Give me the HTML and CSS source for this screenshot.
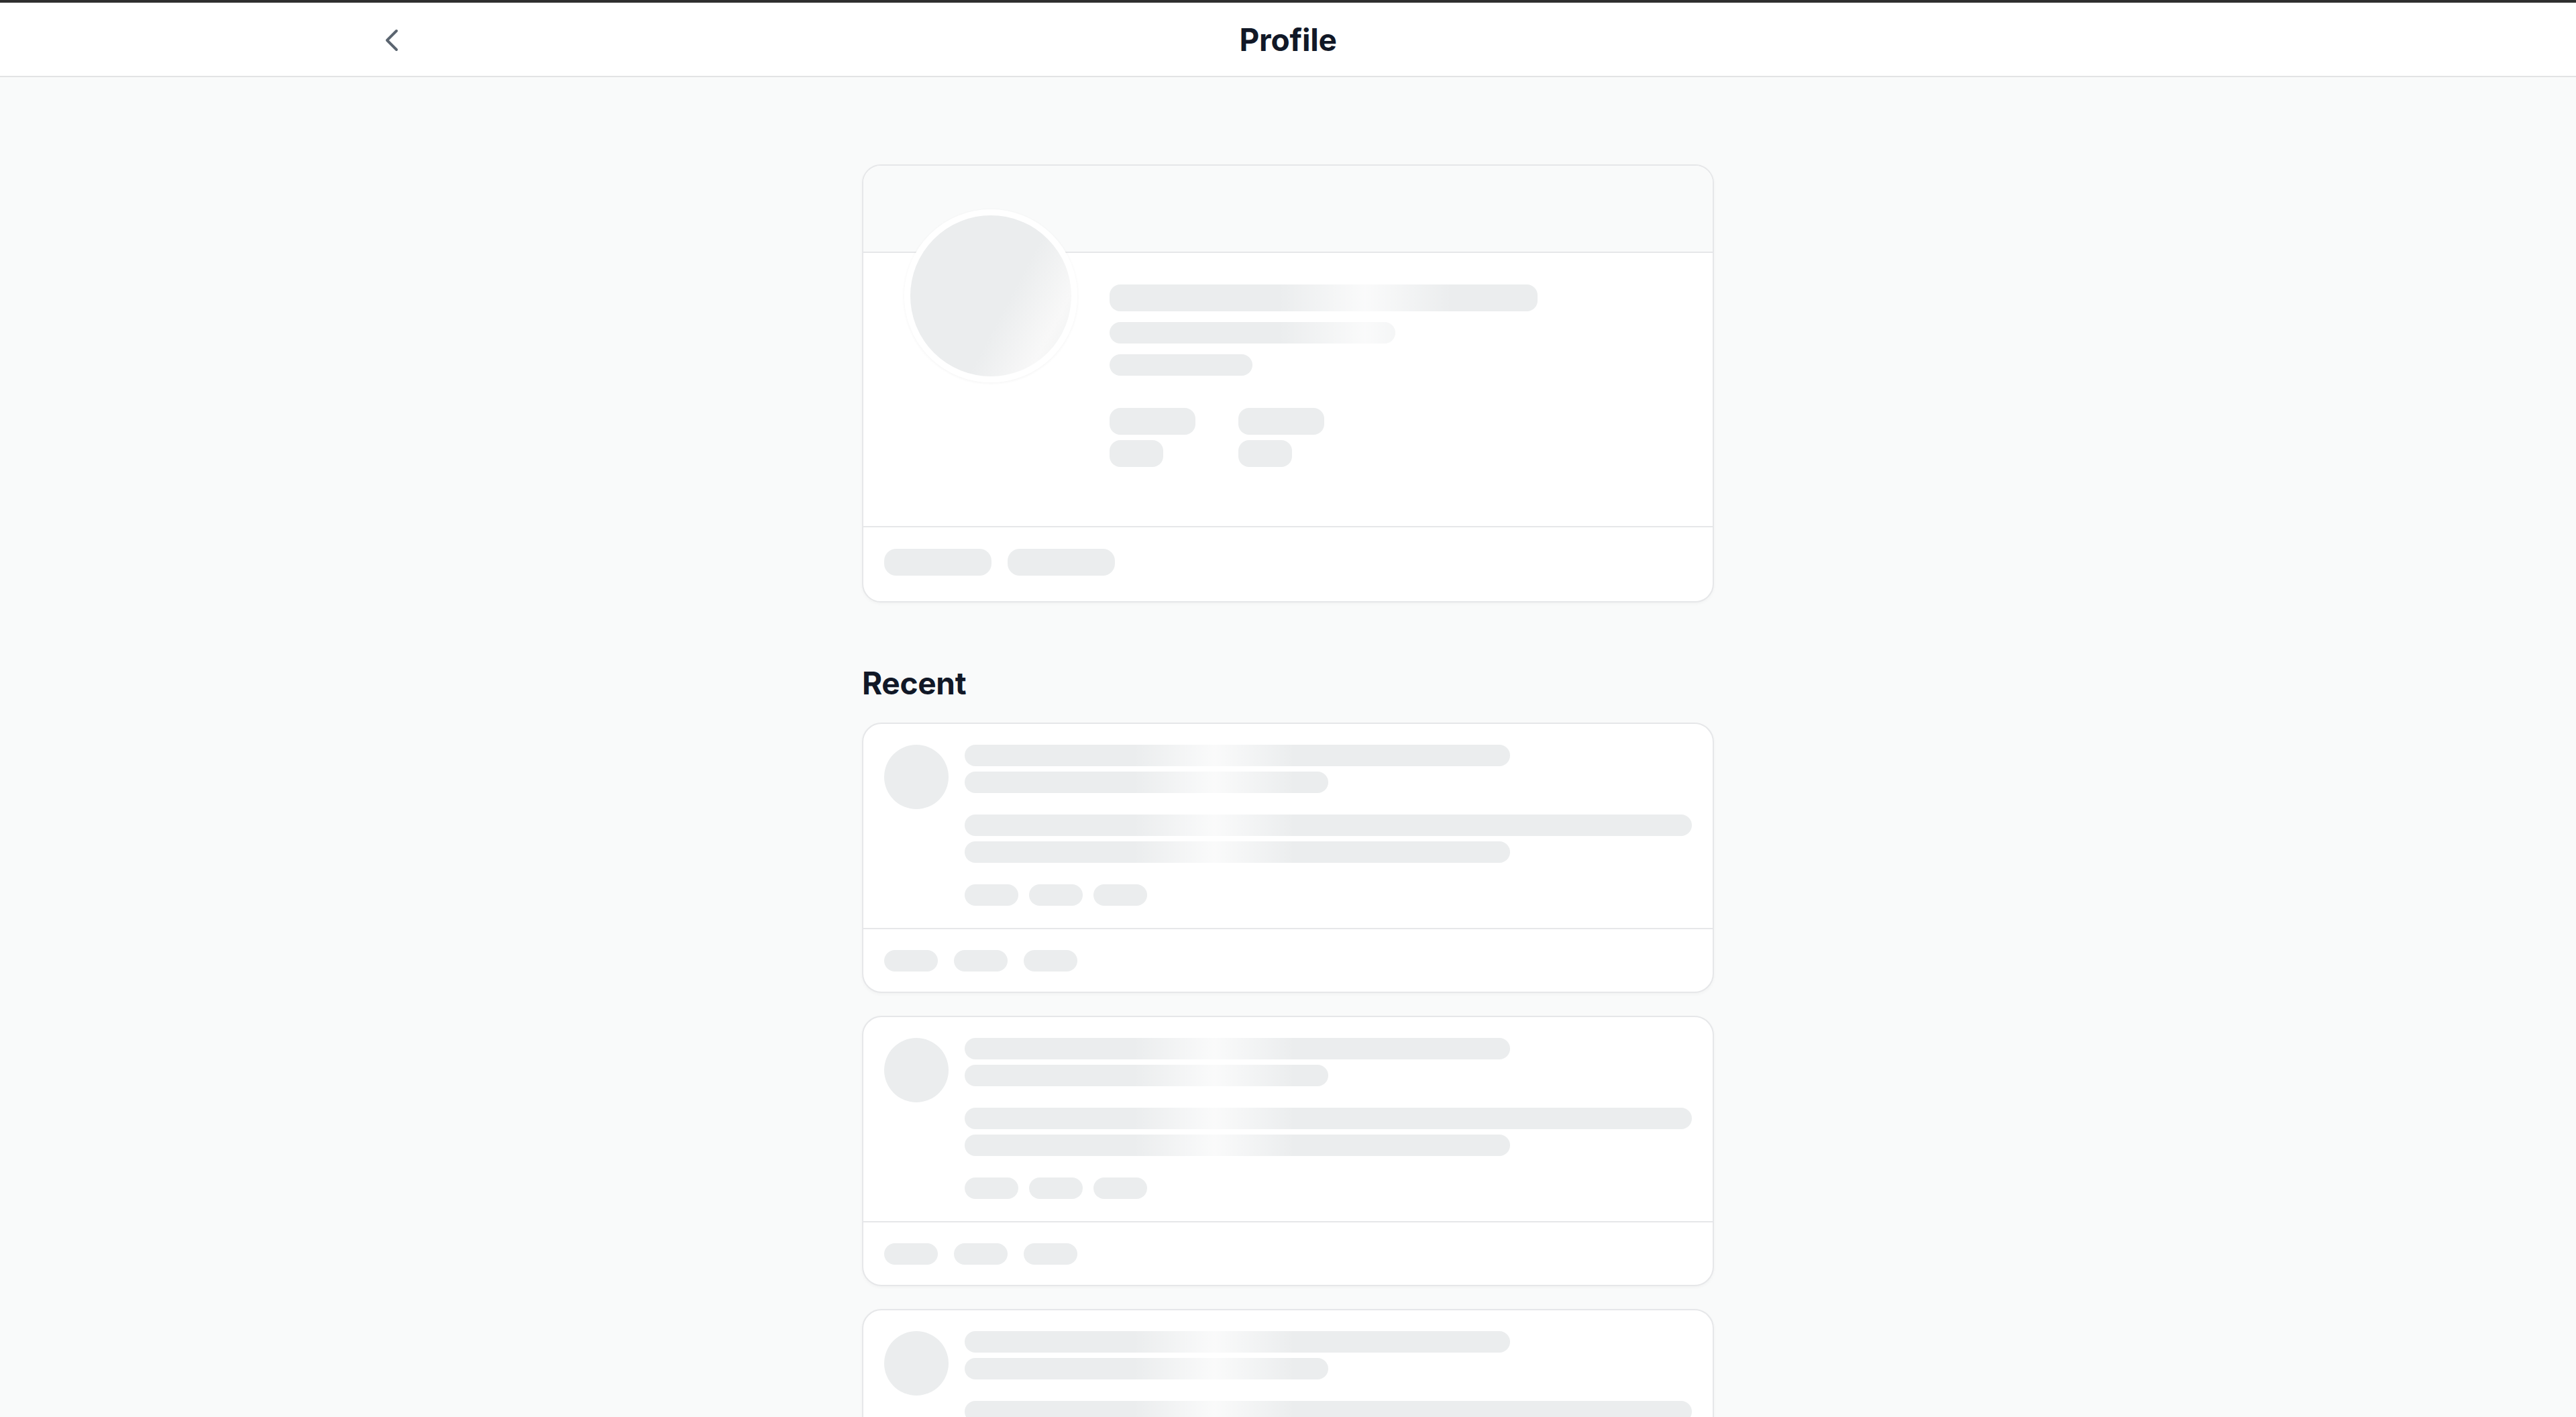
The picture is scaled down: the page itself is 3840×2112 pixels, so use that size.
FILE: index.html
```html
<!DOCTYPE html>
<html lang="en">
<head>
<meta charset="utf-8">
<title>Profile</title>
<link rel="stylesheet" href="styles.css">
</head>
<body>
<div class="topbar"></div>
<header class="header">
  <div class="header-left">
    <button class="back" aria-label="Back">
      <svg viewBox="0 0 24 24" width="56" height="56" fill="none" stroke="currentColor" stroke-width="1.7" stroke-linecap="round" stroke-linejoin="round"><path d="M15 18l-6-6 6-6"/></svg>
    </button>
  </div>
  <h1 class="title">Profile</h1>
  <div class="header-right"></div>
</header>

<main class="main">
  <section class="card profile">
    <div class="cover"></div>
    <div class="profile-body">
      <div class="avatar-lg"></div>
      <div class="info">
        <div class="sk hi-a bar-1"></div>
        <div class="sk hi-a bar-2"></div>
        <div class="sk bar-3"></div>
        <div class="stats">
          <div class="stat">
            <div class="sk stat-top"></div>
            <div class="sk stat-bottom"></div>
          </div>
          <div class="stat">
            <div class="sk stat-top"></div>
            <div class="sk stat-bottom"></div>
          </div>
        </div>
      </div>
    </div>
    <div class="profile-foot">
      <div class="sk pill"></div>
      <div class="sk pill"></div>
    </div>
  </section>

  <h2 class="section-title">Recent</h2>

  <div class="posts">
    <article class="card post">
      <div class="post-body">
        <div class="sk avatar-sm"></div>
        <div class="post-content">
          <div class="sk hi-b line w75"></div>
          <div class="sk hi-b line w50 tight"></div>
          <div class="sk hi-b line w100 loose"></div>
          <div class="sk hi-b line w75 tight"></div>
          <div class="chips">
            <div class="sk chip"></div>
            <div class="sk chip"></div>
            <div class="sk chip"></div>
          </div>
        </div>
      </div>
      <div class="post-foot">
        <div class="sk chip"></div>
        <div class="sk chip"></div>
        <div class="sk chip"></div>
      </div>
    </article>

    <article class="card post">
      <div class="post-body">
        <div class="sk avatar-sm"></div>
        <div class="post-content">
          <div class="sk hi-b line w75"></div>
          <div class="sk hi-b line w50 tight"></div>
          <div class="sk hi-b line w100 loose"></div>
          <div class="sk hi-b line w75 tight"></div>
          <div class="chips">
            <div class="sk chip"></div>
            <div class="sk chip"></div>
            <div class="sk chip"></div>
          </div>
        </div>
      </div>
      <div class="post-foot">
        <div class="sk chip"></div>
        <div class="sk chip"></div>
        <div class="sk chip"></div>
      </div>
    </article>

    <article class="card post">
      <div class="post-body">
        <div class="sk avatar-sm"></div>
        <div class="post-content">
          <div class="sk hi-b line w75"></div>
          <div class="sk hi-b line w50 tight"></div>
          <div class="sk hi-b line w100 loose"></div>
          <div class="sk hi-b line w75 tight"></div>
          <div class="chips">
            <div class="sk chip"></div>
            <div class="sk chip"></div>
            <div class="sk chip"></div>
          </div>
        </div>
      </div>
      <div class="post-foot">
        <div class="sk chip"></div>
        <div class="sk chip"></div>
        <div class="sk chip"></div>
      </div>
    </article>
  </div>
</main>
</body>
</html>
```
FILE: styles.css
```css
* { box-sizing: border-box; }

html, body {
  margin: 0;
  padding: 0;
}

body {
  background: #f9fafa;
  font-family: Inter, "Noto Sans", "Liberation Sans", sans-serif;
  color: #111827;
}

.topbar {
  height: 4px;
  background: #2f2f2f;
}

.header {
  height: 111px;
  background: #ffffff;
  border-bottom: 2px solid #e2e3e4;
  display: grid;
  grid-template-columns: 1fr auto 1fr;
  align-items: center;
}

.header-left {
  display: flex;
  align-items: center;
  padding-left: 556px;
  padding-top: 3px;
}

.back {
  border: 0;
  background: none;
  padding: 0;
  width: 56px;
  height: 56px;
  color: #5b6570;
  display: flex;
  align-items: center;
  justify-content: center;
  cursor: pointer;
}

.back svg { display: block; }

.title {
  margin: 0;
  font-size: 46px;
  font-weight: 700;
  line-height: 1;
  color: #111827;
  letter-spacing: -0.2px;
}

.main {
  width: 1270px;
  margin: 0 auto;
  padding-top: 130px;
  padding-bottom: 80px;
}

.card {
  background: #ffffff;
  border: 2px solid #e6e7e9;
  box-shadow: 0 2px 5px rgba(0, 0, 0, 0.035);
  overflow: hidden;
}

/* skeleton base */
.sk {
  background-color: #ebedee;
  border-radius: 16px;
}

.hi-a {
  background-image: linear-gradient(90deg, rgba(255,255,255,0) 0%, rgba(255,255,255,0.75) 50%, rgba(255,255,255,0) 100%);
  background-attachment: fixed;
  background-repeat: no-repeat;
  background-size: 260px 100%;
  background-position: 1905px 0;
}

.hi-b {
  background-image: linear-gradient(90deg, rgba(255,255,255,0) 0%, rgba(255,255,255,0.75) 50%, rgba(255,255,255,0) 100%);
  background-attachment: fixed;
  background-repeat: no-repeat;
  background-size: 240px 100%;
  background-position: 1690px 0;
}

/* profile card */
.profile {
  border-radius: 28px;
}

.cover {
  height: 130px;
  background: #f9fafa;
  border-bottom: 2px solid #e6e7e9;
}

.profile-body {
  display: flex;
  align-items: flex-start;
  padding: 0 48px 88px 61px;
}

.avatar-lg {
  position: relative;
  flex-shrink: 0;
  width: 258px;
  height: 258px;
  margin-top: -65px;
  border-radius: 50%;
  border: 9px solid #ffffff;
  background: linear-gradient(118deg, #ebedee 0%, #ebedee 58%, #f8f8f8 82%, #eef0f0 100%);
  box-shadow: 0 1px 4px rgba(0, 0, 0, 0.05);
}

.info {
  flex: 1;
  margin-left: 48px;
  padding-top: 47px;
  display: flex;
  flex-direction: column;
}

.bar-1 { width: 75%; height: 40px; }
.bar-2 { width: 50%; height: 32px; margin-top: 16px; }
.bar-3 { width: 25%; height: 32px; margin-top: 16px; }

.stats {
  display: flex;
  gap: 64px;
  margin-top: 48px;
}

.stat {
  display: flex;
  flex-direction: column;
  gap: 8px;
}

.stat-top { width: 128px; height: 40px; }
.stat-bottom { width: 80px; height: 40px; }

.profile-foot {
  border-top: 2px solid #e6e7e9;
  display: flex;
  gap: 24px;
  padding: 32px 31px 38px;
}

.pill {
  width: 160px;
  height: 40px;
  border-radius: 18px;
}

/* recent */
.section-title {
  margin: 93px 0 31px;
  font-size: 46px;
  line-height: 55px;
  font-weight: 700;
  color: #111827;
  letter-spacing: -0.3px;
}

.posts {
  display: flex;
  flex-direction: column;
  gap: 34px;
}

.post {
  border-radius: 29px;
}

.post-body {
  display: flex;
  align-items: flex-start;
  gap: 24px;
  padding: 31px 31px 33px;
}

.avatar-sm {
  flex-shrink: 0;
  width: 96px;
  height: 96px;
  border-radius: 50%;
}

.post-content {
  flex: 1;
  display: flex;
  flex-direction: column;
}

.line { height: 32px; }
.line.tight { margin-top: 8px; }
.line.loose { margin-top: 32px; }
.w100 { width: 100%; }
.w75 { width: 75%; }
.w50 { width: 50%; }

.chips {
  display: flex;
  gap: 16px;
  margin-top: 32px;
}

.chip {
  width: 80px;
  height: 32px;
}

.post-foot {
  border-top: 2px solid #e6e7e9;
  display: flex;
  gap: 24px;
  padding: 31px 31px 30px;
}
```
